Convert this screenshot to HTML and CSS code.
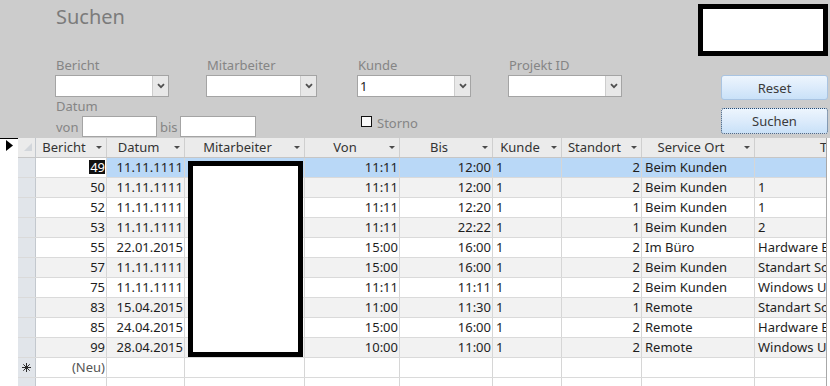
FILE: index.html
```html
<!DOCTYPE html>
<html lang="de">
<head>
<meta charset="utf-8">
<title>Suchen</title>
<link rel="stylesheet" href="styles.css">
</head>
<body>
<div class="form">
  <header class="form-header">
    <div class="filters">
      <h1 class="title">Suchen</h1>
      <div class="field-row">
        <div class="field">
          <div class="lbl">Bericht</div>
          <div class="combo"><span class="combo-val"></span><span class="combo-btn"><svg width="8" height="6" viewBox="0 0 8 6"><path d="M1 1.2 L4 4.2 L7 1.2" fill="none" stroke="#505050" stroke-width="1.8"/></svg></span></div>
        </div>
        <div class="field">
          <div class="lbl">Mitarbeiter</div>
          <div class="combo narrow"><span class="combo-val"></span><span class="combo-btn"><svg width="8" height="6" viewBox="0 0 8 6"><path d="M1 1.2 L4 4.2 L7 1.2" fill="none" stroke="#505050" stroke-width="1.8"/></svg></span></div>
        </div>
        <div class="field">
          <div class="lbl">Kunde</div>
          <div class="combo"><span class="combo-val">1</span><span class="combo-btn"><svg width="8" height="6" viewBox="0 0 8 6"><path d="M1 1.2 L4 4.2 L7 1.2" fill="none" stroke="#505050" stroke-width="1.8"/></svg></span></div>
        </div>
        <div class="field">
          <div class="lbl">Projekt ID</div>
          <div class="combo"><span class="combo-val"></span><span class="combo-btn"><svg width="8" height="6" viewBox="0 0 8 6"><path d="M1 1.2 L4 4.2 L7 1.2" fill="none" stroke="#505050" stroke-width="1.8"/></svg></span></div>
        </div>
      </div>
      <div class="field-row second">
        <div class="date-field">
          <div class="lbl date-lbl">Datum</div>
          <div class="range">
            <span class="lbl von">von</span><span class="text-input from"></span><span class="lbl bis">bis</span><span class="text-input to"></span>
          </div>
        </div>
        <div class="storno"><span class="check"></span><span class="lbl">Storno</span></div>
      </div>
    </div>
    <div class="side">
      <div class="logo-box"></div>
      <button class="btn">Reset</button>
      <button class="btn focus">Suchen</button>
    </div>
  </header>

  <div class="detail">
    <div class="form-selector">
      <svg class="cur" width="7" height="11" viewBox="0 0 7 11"><polygon points="0,0 7,5.5 0,11" fill="#000"/></svg>
    </div>
    <div class="sheet">
      <div class="row head">
        <div class="sel corner"><svg width="8" height="8" viewBox="0 0 8 8"><polygon points="0,8 8,0 8,8" fill="#d2d6db"/></svg></div>
        <div class="hc"><span class="ht">Bericht</span><span class="dd"></span></div>
        <div class="hc"><span class="ht">Datum</span><span class="dd"></span></div>
        <div class="hc"><span class="ht">Mitarbeiter</span><span class="dd"></span></div>
        <div class="hc"><span class="ht">Von</span><span class="dd"></span></div>
        <div class="hc"><span class="ht">Bis</span><span class="dd"></span></div>
        <div class="hc"><span class="ht">Kunde</span><span class="dd"></span></div>
        <div class="hc"><span class="ht">Standort</span><span class="dd"></span></div>
        <div class="hc"><span class="ht">Service Ort</span><span class="dd"></span></div>
        <div class="hc last"><span class="ht-cut">Tätigkeit</span></div>
      </div>

      <div class="row current">
        <div class="sel"></div>
        <div class="c r focus-cell"><span class="hl">49</span></div>
        <div class="c r">11.11.1111</div><div class="c"></div>
        <div class="c r">11:11</div><div class="c r">12:00</div><div class="c l">1</div>
        <div class="c r">2</div><div class="c l">Beim Kunden</div><div class="c l"></div>
      </div>
      <div class="row alt">
        <div class="sel"></div>
        <div class="c r">50</div><div class="c r">11.11.1111</div><div class="c"></div>
        <div class="c r">11:11</div><div class="c r">12:00</div><div class="c l">1</div>
        <div class="c r">2</div><div class="c l">Beim Kunden</div><div class="c l">1</div>
      </div>
      <div class="row">
        <div class="sel"></div>
        <div class="c r">52</div><div class="c r">11.11.1111</div><div class="c"></div>
        <div class="c r">11:11</div><div class="c r">12:20</div><div class="c l">1</div>
        <div class="c r">1</div><div class="c l">Beim Kunden</div><div class="c l">1</div>
      </div>
      <div class="row alt">
        <div class="sel"></div>
        <div class="c r">53</div><div class="c r">11.11.1111</div><div class="c"></div>
        <div class="c r">11:11</div><div class="c r">22:22</div><div class="c l">1</div>
        <div class="c r">1</div><div class="c l">Beim Kunden</div><div class="c l">2</div>
      </div>
      <div class="row">
        <div class="sel"></div>
        <div class="c r">55</div><div class="c r">22.01.2015</div><div class="c"></div>
        <div class="c r">15:00</div><div class="c r">16:00</div><div class="c l">1</div>
        <div class="c r">2</div><div class="c l">Im Büro</div><div class="c l">Hardware Einbau</div>
      </div>
      <div class="row alt">
        <div class="sel"></div>
        <div class="c r">57</div><div class="c r">11.11.1111</div><div class="c"></div>
        <div class="c r">15:00</div><div class="c r">16:00</div><div class="c l">1</div>
        <div class="c r">2</div><div class="c l">Beim Kunden</div><div class="c l">Standart Software</div>
      </div>
      <div class="row">
        <div class="sel"></div>
        <div class="c r">75</div><div class="c r">11.11.1111</div><div class="c"></div>
        <div class="c r">11:11</div><div class="c r">11:11</div><div class="c l">1</div>
        <div class="c r">2</div><div class="c l">Beim Kunden</div><div class="c l">Windows Update</div>
      </div>
      <div class="row alt">
        <div class="sel"></div>
        <div class="c r">83</div><div class="c r">15.04.2015</div><div class="c"></div>
        <div class="c r">11:00</div><div class="c r">11:30</div><div class="c l">1</div>
        <div class="c r">1</div><div class="c l">Remote</div><div class="c l">Standart Software</div>
      </div>
      <div class="row">
        <div class="sel"></div>
        <div class="c r">85</div><div class="c r">24.04.2015</div><div class="c"></div>
        <div class="c r">15:00</div><div class="c r">16:00</div><div class="c l">1</div>
        <div class="c r">2</div><div class="c l">Remote</div><div class="c l">Hardware Einbau</div>
      </div>
      <div class="row alt">
        <div class="sel"></div>
        <div class="c r">99</div><div class="c r">28.04.2015</div><div class="c"></div>
        <div class="c r">10:00</div><div class="c r">11:00</div><div class="c l">1</div>
        <div class="c r">2</div><div class="c l">Remote</div><div class="c l">Windows Update</div>
      </div>
      <div class="row new">
        <div class="sel"><svg width="9" height="9" viewBox="0 0 9 9"><path d="M4.5 0 V9 M0 4.5 H9 M1.3 1.3 L7.7 7.7 M7.7 1.3 L1.3 7.7" stroke="#2a2a2a" stroke-width="1"/></svg></div>
        <div class="c r neu">(Neu)</div><div class="c"></div><div class="c"></div>
        <div class="c"></div><div class="c"></div><div class="c"></div>
        <div class="c"></div><div class="c"></div><div class="c"></div>
      </div>
      <div class="row empty">
        <div class="sel"></div>
        <div class="c"></div><div class="c"></div><div class="c"></div>
        <div class="c"></div><div class="c"></div><div class="c"></div>
        <div class="c"></div><div class="c"></div><div class="c"></div>
      </div>

      <div class="redact"></div>
    </div>
  </div>
</div>
</body>
</html>
```

FILE: styles.css
```css
* { box-sizing: border-box; }
html, body { margin: 0; padding: 0; }
body {
  width: 830px;
  height: 386px;
  overflow: hidden;
  background: #ffffff;
  font-family: "Noto Sans", "DejaVu Sans", sans-serif;
  font-size: 13px;
}

.form { width: 830px; }

/* ---------- form header ---------- */
.form-header {
  display: flex;
  height: 138px;
  background: #cccccc;
  padding-left: 55px;
}
.filters { width: 643px; }
.title {
  margin: 4px 0 0 1px;
  font-size: 20px;
  line-height: 26px;
  font-weight: normal;
  color: #7b7b7b;
}
.field-row { display: flex; }
.field-row:first-of-type { margin-top: 25px; }
.field { width: 151px; }
.lbl {
  color: #858585;
  font-size: 13px;
  line-height: 20px;
  padding-left: 1px;
}
.combo {
  display: flex;
  width: 114px;
  height: 22px;
  background: #ffffff;
  border: 1px solid #a4a4a4;
}
.combo.narrow { width: 111px; }
.combo-val {
  flex: 1;
  padding-left: 2px;
  line-height: 20px;
  color: #222;
  font-size: 13px;
}
.combo-btn {
  width: 16px;
  background: #e8e8e8;
  border-left: 1px solid #cdcdcd;
  display: flex;
  align-items: center;
  justify-content: center;
}

.date-field { width: 302px; }
.date-lbl { line-height: 19px; }
.range { display: flex; align-items: center; height: 21px; }
.von { width: 27px; line-height: 18px; }
.bis { width: 23px; line-height: 18px; padding-left: 3px; }
.text-input {
  height: 21px;
  background: #ffffff;
  border: 1px solid #a4a4a4;
}
.text-input.from { width: 75px; }
.text-input.to { width: 76px; }

.storno {
  display: flex;
  align-items: center;
  margin-top: 18px;
  padding-left: 4px;
  height: 12px;
}
.check {
  width: 11px;
  height: 11px;
  background: #fafafa;
  border: 1px solid #111;
}
.storno .lbl { margin-left: 4px; line-height: 14px; padding-top: 3px; }

.side { width: 132px; }
.logo-box {
  margin-top: 4px;
  width: 130px;
  height: 52px;
  border: 5px solid #000;
  background: #ffffff;
}
.btn {
  display: block;
  margin: 19px 0 0 23px;
  width: 107px;
  height: 25px;
  padding: 0;
  border: 1px solid #a9c4e2;
  border-radius: 3px;
  background: linear-gradient(#edf5fd, #dcebfb 50%, #c9e1f8);
  font-family: "Noto Sans", "DejaVu Sans", sans-serif;
  font-size: 13px;
  color: #3a3a3a;
}
.btn.focus {
  margin-top: 8px;
  height: 26px;
  border: 1px dotted #2f4c6e;
}

/* ---------- detail / datasheet ---------- */
.detail {
  display: flex;
  height: 248px;
  background: #ffffff;
}
.form-selector {
  width: 18px;
  border-top: 1px solid #000;
  padding: 1px 0 0 6px;
}
.cur { display: block; }

.sheet {
  position: relative;
  width: 809px;
  border-right: 1px solid #a8a8a8;
}
.row {
  display: grid;
  grid-template-columns: 18px 71px 78px 120px 95px 93px 69px 80px 113px 71px;
  height: 20px;
  border-bottom: 1px solid #dadada;
  background: #ffffff;
  color: #1e1e1e;
}
.row.alt { background: #f2f2f2; }
.row.current { background: #b9d8f7; }
.row.head { background: #ebebeb; border-bottom: 1px solid #c6c6c6; }

.sel {
  background: #e1e5ea;
  border-right: 1px solid #c3c8ce;
  display: flex;
  align-items: center;
  justify-content: center;
}
.sel.corner {
  background: #ebebeb;
  align-items: flex-start;
  justify-content: flex-start;
  padding: 5px 0 0 6px;
}

.hc {
  display: flex;
  align-items: center;
  border-right: 1px solid #cfcfcf;
  color: #333;
  overflow: hidden;
  white-space: nowrap;
}
.ht { flex: 1; text-align: center; line-height: 18px; padding-bottom: 1px; }
.dd {
  width: 14px;
  display: flex;
  justify-content: center;
}
.dd::before {
  content: "";
  border-left: 3px solid transparent;
  border-right: 3px solid transparent;
  border-top: 3px solid #4a4a4a;
}
.hc.last { border-right: none; }
.ht-cut { padding-left: 65px; line-height: 18px; padding-bottom: 1px; }

.c {
  border-right: 1px solid #d6d6d6;
  line-height: 19px;
  white-space: nowrap;
  overflow: hidden;
}
.c:last-child { border-right: none; }
.c.r { text-align: right; padding-right: 1px; }
.c.l { padding-left: 3px; }
.focus-cell { background: #ffffff; }
.hl {
  display: inline-block;
  background: #111;
  color: #fff;
  line-height: 14px;
  padding: 0 0 0 1px;
}
.neu { color: #555; }

.redact {
  position: absolute;
  left: 170px;
  top: 23px;
  width: 115px;
  height: 196px;
  border: 5px solid #000;
  background: #ffffff;
}
```
